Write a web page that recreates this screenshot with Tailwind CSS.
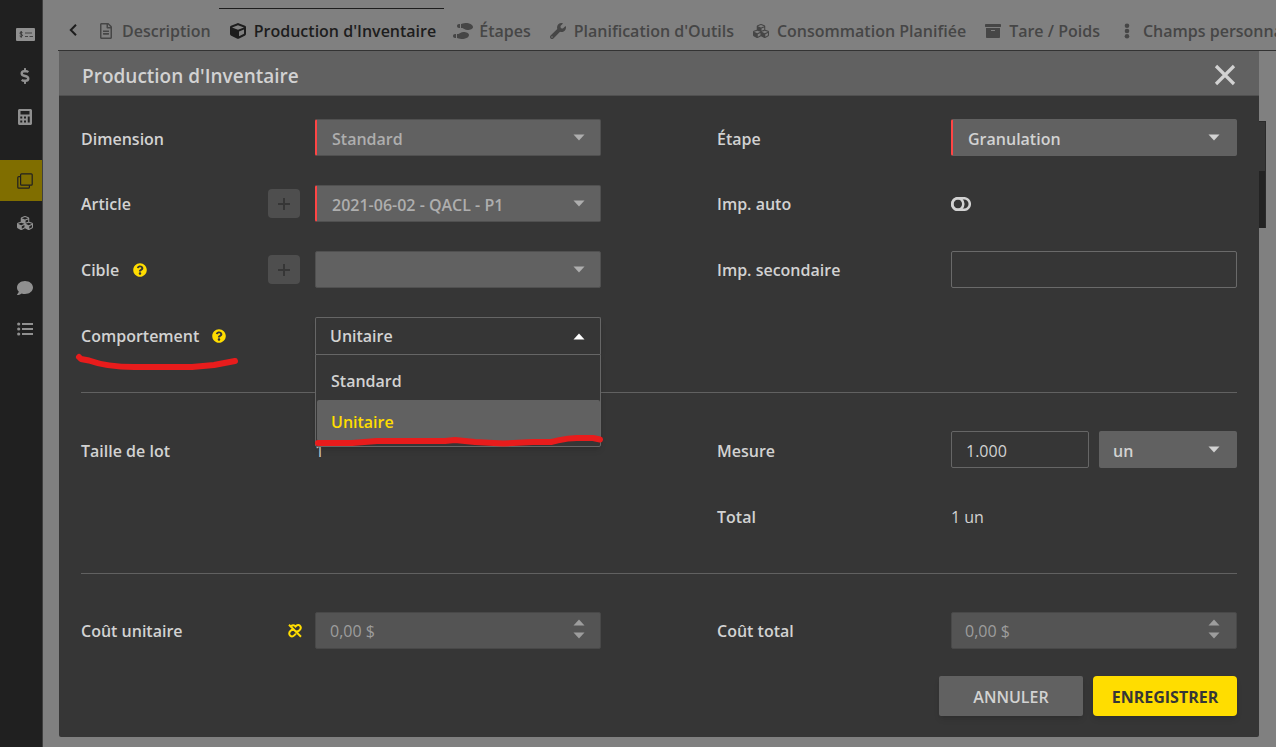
<!DOCTYPE html>
<html lang="fr">
<head>
<meta charset="utf-8">
<meta name="viewport" content="width=device-width, initial-scale=1">
<title>Production d'Inventaire</title>
<script src="https://cdn.jsdelivr.net/npm/@tailwindcss/browser@4"></script>
</head>
<body class="relative flex min-h-screen overflow-hidden bg-[#808080] font-['Open_Sans','Noto_Sans',sans-serif] text-base font-semibold text-[#d2d2d2]">

<!-- Shared symbols -->
<svg class="hidden" aria-hidden="true">
  <symbol id="down" viewBox="0 0 12 7"><path d="M.5.5h11L6 6.5z" fill="currentColor"/></symbol>
  <symbol id="up" viewBox="0 0 12 7"><path d="M.5 6.5h11L6 .5z" fill="currentColor"/></symbol>
  <symbol id="plus" viewBox="0 0 12 12"><path d="M6 0v12M0 6h12" stroke="currentColor" stroke-width="2"/></symbol>
  <symbol id="help" viewBox="0 0 512 512"><path fill="currentColor" d="M504 256c0 136.997-111.043 248-248 248S8 392.997 8 256C8 119.083 119.043 8 256 8s248 111.083 248 248zM262.655 90c-54.497 0-89.255 22.957-116.549 63.758-3.536 5.286-2.353 12.415 2.715 16.258l34.699 26.31c5.205 3.947 12.621 3.008 16.665-2.122 17.864-22.658 30.113-35.797 57.303-35.797 20.429 0 45.698 13.148 45.698 32.958 0 14.976-12.363 22.667-32.534 33.976C247.128 238.528 216 254.941 216 296v4c0 6.627 5.373 12 12 12h56c6.627 0 12-5.373 12-12v-1.333c0-28.462 83.186-29.647 83.186-106.667 0-58.002-60.165-102-116.531-102zM256 338c-25.365 0-46 20.635-46 46 0 25.364 20.635 46 46 46s46-20.636 46-46c0-25.365-20.635-46-46-46z"/></symbol>
  <symbol id="cubes" viewBox="0 0 512 512"><path fill="currentColor" d="M488.600 250.200L392 214V105.500c0-15-9.300-28.400-23.400-33.700l-100-37.500c-8.100-3.100-17.100-3.100-25.300 0l-100 37.500c-14.100 5.300-23.400 18.700-23.400 33.700V214l-96.600 36.200C9.300 255.500 0 268.900 0 283.900V394c0 13.600 7.700 26.100 19.900 32.200l100 50c10.100 5.100 22.100 5.100 32.200 0l103.900-52 103.900 52c10.100 5.100 22.100 5.100 32.200 0l100-50c12.200-6.100 19.900-18.600 19.900-32.200V283.900c0-15-9.300-28.400-23.400-33.700zM358 214.800l-85 31.900v-68.200l85-37v73.300zM154 104.100l102-38.200 102 38.200v.6l-102 41.400-102-41.400v-.6zm84 291.100l-85 42.500v-79.100l85-38.800v75.400zm0-112l-102 41.400-102-41.400v-.6l102-38.200 102 38.200v.6zm240 112l-85 42.500v-79.100l85-38.800v75.400zm0-112l-102 41.400-102-41.400v-.6l102-38.200 102 38.200v.6z"/></symbol>
</svg>

<!-- Side navigation -->
<nav aria-label="Navigation" class="w-[43px] shrink-0 border-r border-[#3f3f3f] bg-[#202020] pt-[14px] text-[#909090]">
  <a href="#" aria-label="Chèques" class="flex h-[41px] items-center justify-end pr-[7px]"><svg class="h-[15px] w-[19px]" viewBox="0 0 19 15"><rect y="1" width="19" height="13" rx="1" fill="currentColor"/><path d="M9 6h7M9 9.500h3M13.500 9.500H17" stroke="#444" stroke-width="1"/><path d="M6.500 5.600C5.500 4.900 3.800 5.100 3.900 6.200 4 7.400 6.500 7 6.500 8.400 6.400 9.500 4.700 9.700 3.700 9M5.200 4v6.800" fill="none" stroke="#333"/></svg></a>
  <a href="#" aria-label="Finances" class="flex h-[41px] items-center justify-end pr-[12px]"><svg class="h-4 w-[10px]" viewBox="0 0 288 512"><path fill="currentColor" d="M209.200 233.400l-108-31.600C88.700 198.200 80 186.500 80 173.500c0-16.300 13.200-29.500 29.500-29.500h66.300c12.200 0 24.200 3.700 34.200 10.500 6.100 4.100 14.300 3.100 19.500-2l34.800-34c7.100-6.900 6.100-18.400-1.800-24.500C238 74.800 207.400 64.100 176 64V16c0-8.800-7.200-16-16-16h-32c-8.800 0-16 7.200-16 16v48h-2.500C45.800 64-5.400 118.700.5 183.600c4.200 46.100 39.400 83.600 83.800 96.600l102.500 30c12.500 3.700 21.200 15.300 21.200 28.300 0 16.300-13.200 29.500-29.500 29.500h-66.300C100 368 88 364.300 78 357.500c-6.100-4.100-14.300-3.100-19.500 2l-34.800 34c-7.100 6.900-6.100 18.400 1.800 24.500 24.500 19.200 55.100 29.900 86.500 30v48c0 8.800 7.200 16 16 16h32c8.800 0 16-7.200 16-16v-48.200c46.600-.9 90.300-28.600 105.700-72.700 21.500-61.600-14.600-124.800-72.500-141.700z"/></svg></a>
  <a href="#" aria-label="Calculatrice" class="flex h-[41px] items-center justify-end pr-[10px]"><svg class="h-4 w-[14px]" viewBox="0 0 448 512"><path fill="currentColor" fill-rule="evenodd" d="M400 0H48C22.400 0 0 22.400 0 48v416c0 25.600 22.400 48 48 48h352c25.600 0 48-22.400 48-48V48c0-25.600-22.400-48-48-48zM80 64h288v112H80zM72 240h64v64H72zM72 368h64v64H72zM192 240h64v64h-64zM192 368h64v64h-64zM312 240h64v192h-64z"/></svg></a>
  <a href="#" aria-label="Production" aria-current="page" class="mt-[23px] flex h-[41px] items-center justify-end bg-[#806e00] pr-[9px] text-[#202020]"><svg class="size-4" viewBox="0 0 16 16" fill="none" stroke="currentColor" stroke-width="1.200"><rect x="3.600" y=".8" width="11.600" height="11.400" rx="1"/><path d="M3.600 3.600H1.800a1 1 0 0 0-1 1v9.600a1 1 0 0 0 1 1h9.600a1 1 0 0 0 1-1v-2"/></svg></a>
  <a href="#" aria-label="Inventaire" class="flex h-[44px] items-center justify-end pr-[9px]"><svg class="size-4"><use href="#cubes"/></svg></a>
  <a href="#" aria-label="Messages" class="mt-[22px] flex h-[41px] items-center justify-end pr-[9px]"><svg class="size-4" viewBox="0 0 512 512"><path fill="currentColor" d="M256 32C114.600 32 0 125.100 0 240c0 49.600 21.400 95 57 130.700C44.500 421.100 2.700 466 2.200 466.500c-2.200 2.300-2.800 5.700-1.500 8.700S4.800 480 8 480c66.300 0 116-31.800 140.600-51.400 32.700 12.300 69 19.400 107.400 19.400 141.400 0 256-93.100 256-208S397.400 32 256 32z"/></svg></a>
  <a href="#" aria-label="Listes" class="flex h-[41px] items-center justify-end pr-[9px]"><svg class="size-4" viewBox="0 0 16 16" fill="currentColor"><circle cx="1.700" cy="3" r="1.600"/><circle cx="1.700" cy="8" r="1.600"/><circle cx="1.700" cy="13" r="1.600"/><path d="M5 2h11v2H5zM5 7h11v2H5zM5 12h11v2H5z"/></svg></a>
</nav>

<!-- Page behind the dialog -->
<main class="min-w-0 flex-1 pt-2 pl-[15px]">
  <div class="flex h-[43px] overflow-hidden border-b border-[#333] text-[#464646]">
    <button type="button" aria-label="Onglets précédents" class="flex w-[29px] shrink-0 items-center justify-center text-[#1d1d1d]"><svg class="mt-[2px] h-3 w-2" viewBox="0 0 8 12" fill="none" stroke="currentColor" stroke-width="2"><path d="M7 .8 1.800 6 7 11.200"/></svg></button>
    <div role="tablist" class="flex whitespace-nowrap">
      <button role="tab" type="button" class="flex items-center gap-[6px] pt-1 pr-2 pl-[9px]"><svg class="h-4 w-5" viewBox="0 0 384 512"><path fill="currentColor" d="M288 248v28c0 6.600-5.400 12-12 12H108c-6.600 0-12-5.400-12-12v-28c0-6.600 5.400-12 12-12h168c6.600 0 12 5.400 12 12zm-12 72H108c-6.600 0-12 5.400-12 12v28c0 6.600 5.400 12 12 12h168c6.600 0 12-5.400 12-12v-28c0-6.600-5.400-12-12-12zm108-188.100V464c0 26.500-21.500 48-48 48H48c-26.500 0-48-21.500-48-48V48C0 21.500 21.500 0 48 0h204.100C264.800 0 277 5.100 286 14.100L369.900 98c9 8.900 14.100 21.200 14.100 33.900zm-128-80V128h76.100L256 51.900zM336 464V176H232c-13.300 0-24-10.700-24-24V48H48v416h288z"/></svg>Description</button>
      <button role="tab" type="button" aria-selected="true" class="flex items-center gap-[6px] border-t border-[#1d1d1d] pt-[3px] pr-2 pl-[9px] text-[#1d1d1d]"><svg class="h-4 w-5" viewBox="0 0 512 512"><path fill="currentColor" d="M239.100 6.300l-208 78c-18.700 7-31.100 25-31.100 45v225.100c0 18.200 10.300 34.800 26.500 42.900l208 104c13.500 6.800 29.400 6.800 42.900 0l208-104c16.300-8.100 26.500-24.800 26.500-42.900V129.300c0-20-12.400-37.900-31.100-44.900l-208-78C262 2.200 250 2.200 239.100 6.300zM256 68.400l192 72v1.100l-192 78-192-78v-1.100l192-72zm32 356V275.500l160-65v133.900l-160 80z"/></svg>Production d'Inventaire</button>
      <button role="tab" type="button" class="flex items-center gap-[6px] pt-1 pr-2 pl-[9px]"><svg class="h-4 w-5" viewBox="0 0 640 512"><path fill="currentColor" d="M192 160h32V32h-32c-35.350 0-64 28.650-64 64s28.650 64 64 64zM0 416c0 35.350 28.650 64 64 64h32V352H64c-35.350 0-64 28.650-64 64zm337.460-128c-34.910 0-76.160 13.120-104.730 32-24.790 16.380-44.520 32-104.730 32v128l57.530 15.970c26.210 7.280 53.010 13.120 80.310 15.050 32.690 2.310 65.600.67 97.580-6.200C472.900 481.300 512 429.220 512 384c0-64-84.180-96-174.540-96zM491.420 7.190C459.440.32 426.530-1.330 393.840.99c-27.300 1.930-54.100 7.770-80.310 15.040L256 32v128c60.200 0 79.940 15.620 104.730 32 28.570 18.880 69.820 32 104.730 32C555.820 224 640 192 640 128c0-45.220-39.100-97.300-148.580-120.810z"/></svg>Étapes</button>
      <button role="tab" type="button" class="flex items-center gap-[6px] pt-1 pr-2 pl-[9px]"><svg class="h-4 w-5" viewBox="0 0 512 512"><path fill="currentColor" d="M507.730 109.100c-2.240-9.030-13.540-12.090-20.120-5.510l-74.360 74.360-67.880-11.310-11.310-67.880 74.360-74.360c6.620-6.620 3.430-17.900-5.660-20.160-47.380-11.740-99.550.91-136.580 37.930-39.640 39.640-50.550 97.100-34.050 147.200L18.740 402.760c-24.990 24.990-24.990 65.510 0 90.500 24.990 24.990 65.510 24.990 90.500 0l213.210-213.210c50.120 16.710 107.470 5.680 147.370-34.220 37.070-37.070 49.700-89.320 37.910-136.730zM64 472c-13.250 0-24-10.750-24-24 0-13.260 10.750-24 24-24s24 10.740 24 24c0 13.250-10.750 24-24 24z"/></svg>Planification d'Outils</button>
      <button role="tab" type="button" class="flex items-center gap-[6px] pt-1 pr-2 pl-[9px]"><svg class="h-4 w-5"><use href="#cubes"/></svg>Consommation Planifiée</button>
      <button role="tab" type="button" class="flex items-center gap-[6px] pt-1 pr-2 pl-[9px]"><svg class="h-4 w-5" viewBox="0 0 512 512"><path fill="currentColor" d="M32 448c0 17.700 14.300 32 32 32h384c17.700 0 32-14.300 32-32V160H32v288zm160-212c0-6.600 5.400-12 12-12h104c6.600 0 12 5.400 12 12v8c0 6.600-5.400 12-12 12H204c-6.600 0-12-5.400-12-12v-8zM480 32H32C14.300 32 0 46.300 0 64v48c0 8.800 7.200 16 16 16h480c8.800 0 16-7.200 16-16V64c0-17.700-14.300-32-32-32z"/></svg>Tare / Poids</button>
      <button role="tab" type="button" class="flex items-center gap-[6px] pt-1 pr-2 pl-[9px]"><svg class="h-4 w-5" viewBox="0 0 20 16" fill="currentColor"><circle cx="10" cy="2.700" r="2.300"/><circle cx="10" cy="8" r="2.300"/><circle cx="10" cy="13.300" r="2.300"/></svg>Champs personnalisés</button>
    </div>
  </div>
  <div class="mt-[70px] mr-[10px] ml-2 h-[107px] border-t border-r border-[#2b2b2b] bg-[#363636] pt-[49px]"><div class="h-[57px] bg-[#232323]"></div></div>
</main>

<!-- Dialog -->
<form role="dialog" aria-labelledby="title" class="absolute top-[51px] right-[17px] left-[59px] rounded-b-xs bg-[#363636]">
  <header class="flex h-[45px] items-center justify-between border-b border-[#505050] bg-[#616161] px-[23px] pt-1">
    <h1 id="title" class="pt-[2px] text-[19px] leading-6">Production d'Inventaire</h1>
    <button type="button" aria-label="Fermer"><svg class="size-[22px]" viewBox="0 0 22 22"><path d="M2 2l18 18M20 2 2 20" stroke="currentColor" stroke-width="3.200"/></svg></button>
  </header>

  <div class="px-[22px] pt-[23px] pb-[21px]">
    <section class="grid grid-cols-2 gap-x-[116px] pb-[38px]">
      <div class="flex flex-col gap-[29px]">
        <div class="grid h-[37px] grid-cols-[234px_1fr] items-center">
          <label for="dimension" class="pt-[2px]">Dimension</label>
          <div class="relative h-full">
            <select id="dimension" disabled class="size-full appearance-none rounded-xs border border-l-2 border-[#505050] border-l-[#ff4545] bg-[#616161] pt-[2px] pr-8 pl-[15px] text-[#aeaeae] opacity-100"><option>Standard</option></select>
            <svg class="pointer-events-none absolute top-[15px] right-4 h-[7px] w-3 text-[#aeaeae]"><use href="#down"/></svg>
          </div>
        </div>
        <div class="grid h-[37px] grid-cols-[234px_1fr] items-center">
          <div class="flex items-center justify-between pr-[15px]">
            <label for="article">Article</label>
            <button type="button" disabled aria-label="Ajouter un article" class="flex h-[29px] w-8 items-center justify-center rounded-sm bg-[#4e4e4e] text-[#363636]"><svg class="size-3"><use href="#plus"/></svg></button>
          </div>
          <div class="relative h-full">
            <select id="article" disabled class="size-full appearance-none rounded-xs border border-l-2 border-[#505050] border-l-[#ff4545] bg-[#616161] pt-[2px] pr-8 pl-[15px] text-[#aeaeae] opacity-100"><option>2021-06-02 - QACL - P1</option></select>
            <svg class="pointer-events-none absolute top-[15px] right-4 h-[7px] w-3 text-[#aeaeae]"><use href="#down"/></svg>
          </div>
        </div>
        <div class="grid h-[37px] grid-cols-[234px_1fr] items-center">
          <div class="flex items-center pr-[15px]">
            <label for="cible">Cible</label>
            <button type="button" aria-label="Aide sur la cible" class="ml-[14px] text-[#ffdd00]"><svg class="size-[14px]"><use href="#help"/></svg></button>
            <button type="button" disabled aria-label="Ajouter une cible" class="ml-auto flex h-[29px] w-8 items-center justify-center rounded-sm bg-[#4e4e4e] text-[#363636]"><svg class="size-3"><use href="#plus"/></svg></button>
          </div>
          <div class="relative h-full">
            <select id="cible" disabled class="size-full appearance-none rounded-xs border border-[#505050] bg-[#616161] pr-8 pl-[15px] opacity-100"><option></option></select>
            <svg class="pointer-events-none absolute top-[15px] right-4 h-[7px] w-3 text-[#aeaeae]"><use href="#down"/></svg>
          </div>
        </div>
        <div class="grid h-[37px] grid-cols-[234px_1fr] items-center">
          <div class="flex items-center">
            <span id="comportement-label">Comportement</span>
            <button type="button" aria-label="Aide sur le comportement" class="ml-[13px] text-[#ffdd00]"><svg class="size-[14px]"><use href="#help"/></svg></button>
          </div>
          <div class="relative h-full">
            <button type="button" id="comportement" role="combobox" aria-expanded="true" aria-controls="choix" aria-labelledby="comportement-label comportement" class="flex size-full items-center justify-between rounded-t-xs border border-b-0 border-[#666] pr-[15px] pl-[14px] shadow-md">Unitaire<svg class="h-[7px] w-3 text-white"><use href="#up"/></svg></button>
            <ul id="choix" role="listbox" aria-labelledby="comportement-label" class="absolute inset-x-0 top-full z-10 rounded-b-xs border border-[#666] bg-[#363636] pt-1 pb-[5px] shadow-md">
              <li role="option" class="flex h-[41px] items-center pt-[2px] pl-[15px]">Standard</li>
              <li role="option" aria-selected="true" class="ml-px flex h-[41px] items-center rounded-xs bg-[#616161] pt-[2px] pl-[14px] text-[#ffdd00]">Unitaire</li>
            </ul>
          </div>
        </div>
      </div>

      <div class="flex flex-col gap-[29px]">
        <div class="grid h-[37px] grid-cols-[234px_1fr] items-center">
          <label for="etape" class="pt-[2px]">Étape</label>
          <div class="relative h-full">
            <select id="etape" class="size-full appearance-none rounded-xs border border-l-2 border-[#616161] border-l-[#ff4545] bg-[#616161] pt-[2px] pr-8 pl-[15px]"><option>Granulation</option></select>
            <svg class="pointer-events-none absolute top-[15px] right-[17px] h-[7px] w-3"><use href="#down"/></svg>
          </div>
        </div>
        <div class="grid h-[37px] grid-cols-[234px_1fr] items-center">
          <label for="auto">Imp. auto</label>
          <div class="relative h-[14px] w-5">
            <input id="auto" type="checkbox" class="absolute inset-0 size-full opacity-0">
            <svg class="pointer-events-none h-[14px] w-5" viewBox="0 0 20 14" fill="none" stroke="currentColor" stroke-width="2.500"><rect x="1.200" y="1.200" width="17.600" height="11.600" rx="5.800"/><ellipse cx="6.800" cy="7" rx="5.500" ry="5.800"/></svg>
          </div>
        </div>
        <div class="grid h-[37px] grid-cols-[234px_1fr] items-center">
          <label for="secondaire">Imp. secondaire</label>
          <input id="secondaire" type="text" class="size-full rounded-xs border border-[#6a6a6a] px-[14px]">
        </div>
      </div>
    </section>

    <section class="grid grid-cols-2 gap-x-[116px] border-t border-[#616161] pt-[38px] pb-[39px]">
      <div class="grid h-[37px] grid-cols-[234px_1fr] items-center pt-[2px]">
        <span>Taille de lot</span>
        <span class="font-normal">1</span>
      </div>
      <div class="flex flex-col gap-[29px]">
        <div class="grid h-[37px] grid-cols-[234px_1fr] items-center">
          <label for="mesure" class="pt-[2px]">Mesure</label>
          <div class="grid h-full grid-cols-2 gap-[10px]">
            <input id="mesure" type="text" value="1.000" class="size-full rounded-xs border border-[#666] px-[14px] pt-[2px] font-normal">
            <div class="relative h-full">
              <select aria-label="Unité" class="size-full appearance-none rounded-xs bg-[#616161] pt-[2px] pr-8 pl-[14px]"><option>un</option></select>
              <svg class="pointer-events-none absolute top-[15px] right-[17px] h-[7px] w-3"><use href="#down"/></svg>
            </div>
          </div>
        </div>
        <div class="grid h-[37px] grid-cols-[234px_1fr] items-center pt-[2px]">
          <span>Total</span>
          <span class="font-normal">1 un</span>
        </div>
      </div>
    </section>

    <section class="grid grid-cols-2 gap-x-[116px] border-t border-[#616161] pt-[38px]">
      <div class="grid h-[37px] grid-cols-[234px_1fr] items-center">
        <div class="flex items-center justify-between pr-[13px]">
          <label for="unitaire">Coût unitaire</label>
          <button type="button" aria-label="Délier le coût" class="text-[#ffdd00]"><svg class="size-[14px]" viewBox="0 0 14 14" fill="none" stroke="currentColor" stroke-width="2"><path d="M1 .8 13 12.800"/><path d="M3.200 2.300C4.600.8 6.500 1.200 7.500 2.500M6.800 3.200 8.300 1.700C9.600.6 11.500.9 12.300 2.200s.5 2.700-.6 3.700L10.400 7.200H8.300"/><path d="M5.800 6H3.500L2.200 7.300C.9 8.600.9 10.500 2.100 11.600s2.900 1 4.100-.2L8 9.600"/></svg></button>
        </div>
        <div class="relative h-full">
          <input id="unitaire" type="text" value="0,00 $" disabled class="size-full rounded-xs border border-[#484848] bg-[#545454] px-[14px] font-normal text-[#9d9d9d]">
          <div class="absolute top-[7px] right-4 flex flex-col gap-[6px] text-[#9d9d9d]">
            <button type="button" disabled aria-label="Augmenter"><svg class="h-[7px] w-3"><use href="#up"/></svg></button>
            <button type="button" disabled aria-label="Diminuer"><svg class="h-[7px] w-3"><use href="#down"/></svg></button>
          </div>
        </div>
      </div>
      <div class="grid h-[37px] grid-cols-[234px_1fr] items-center">
        <label for="total">Coût total</label>
        <div class="relative h-full">
          <input id="total" type="text" value="0,00 $" disabled class="size-full rounded-xs border border-[#484848] bg-[#545454] px-[13px] font-normal text-[#9d9d9d]">
          <div class="absolute top-[7px] right-[17px] flex flex-col gap-[6px] text-[#9d9d9d]">
            <button type="button" disabled aria-label="Augmenter"><svg class="h-[7px] w-3"><use href="#up"/></svg></button>
            <button type="button" disabled aria-label="Diminuer"><svg class="h-[7px] w-3"><use href="#down"/></svg></button>
          </div>
        </div>
      </div>
    </section>

    <footer class="mt-[27px] flex justify-end gap-[10px]">
      <button type="button" class="h-10 w-36 rounded-xs bg-[#616161] pt-[2px] shadow-md">ANNULER</button>
      <button type="submit" class="h-10 w-36 rounded-sm bg-[#ffdd00] pt-[2px] font-bold text-[#363636] shadow-md">ENREGISTRER</button>
    </footer>
  </div>
</form>

<!-- Hand-drawn red underlines -->
<svg class="pointer-events-none absolute top-[350px] left-[74px] z-20 h-6 w-[168px]" viewBox="0 0 168 24" fill="none" stroke="#e81c1c" stroke-width="6" stroke-linecap="round" stroke-linejoin="round" aria-hidden="true"><path d="M5 7l2 2 8 1.500C30 16 43 17 60 17h58l22-2 21-4"/></svg>
<svg class="pointer-events-none absolute top-[432px] left-[312px] z-20 h-4 w-[294px]" viewBox="0 0 294 16" fill="none" stroke="#e81c1c" stroke-width="6" stroke-linecap="round" stroke-linejoin="round" aria-hidden="true"><path d="M6 11h34l25-2h68l10-1 20 2 28 1.500 30-1.500h18c10-2 14-4 26-4h16l7 1.500"/></svg>
</body>
</html>
